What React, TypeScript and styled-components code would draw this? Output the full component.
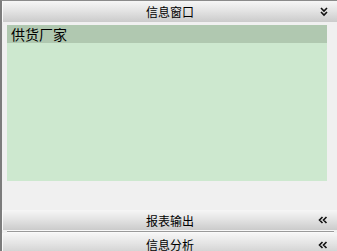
import React from 'react';
import styled, { createGlobalStyle } from 'styled-components';

const GlobalStyle = createGlobalStyle`
  html, body {
    margin: 0;
    padding: 0;
    overflow: hidden;
    background: #f0f0f0;
    font-family: "Noto Sans CJK SC", "Noto Sans", sans-serif;
  }
`;

const Frame = styled.div`
  width: 337px;
  height: 256px;
  box-sizing: border-box;
  border-left: 2px solid #7c7c7c;
  border-top: 1px solid #8a8a8a;
  background: #f0f0f0;
  display: flex;
  flex-direction: column;
  overflow: hidden;
`;

const Bar = styled.div<{ $h: number }>`
  height: ${(p) => p.$h}px;
  flex: none;
  position: relative;
  display: flex;
  align-items: center;
  justify-content: center;
  background: linear-gradient(#f6f6f6, #e4e4e4 45%, #cbcbcb);
  border-left: 1px solid #fbfbfb;
  font-size: 12px;
  color: #000;
  box-sizing: border-box;
`;

const BarIcon = styled.svg`
  position: absolute;
  right: 9px;
  top: 50%;
  transform: translateY(-50%);
`;

const Body = styled.div`
  flex: 1;
  padding: 3px 10px 29px 5px;
  display: flex;
`;

const List = styled.div`
  flex: 1;
  background: #cde8cf;
`;

const Row = styled.div<{ $active?: boolean }>`
  height: 18px;
  line-height: 18px;
  padding-left: 4px;
  font-size: 14px;
  color: #000;
  background: ${(p) => (p.$active ? '#b0c8b0' : 'transparent')};
`;

const Divider = styled.div`
  height: 3px;
  margin: 0 3px 0 5px;
  flex: none;
  background: linear-gradient(#f8f8f8 0 1px, #9a9a9a 1px 2px, #fafafa 2px);
`;

const DownChevrons = () => (
  <BarIcon width="8" height="10" viewBox="0 0 8 10">
    <path d="M1 1 L4 4 L7 1 M1 5 L4 8 L7 5" stroke="#111" strokeWidth="1.6" fill="none" />
  </BarIcon>
);

const LeftChevrons = () => (
  <BarIcon width="10" height="8" viewBox="0 0 10 8">
    <path d="M4.5 1 L1.5 4 L4.5 7 M8.5 1 L5.5 4 L8.5 7" stroke="#111" strokeWidth="1.6" fill="none" />
  </BarIcon>
);

export default function App() {
  return (
    <>
      <GlobalStyle />
      <Frame>
        <Bar $h={21}>
          信息窗口
          <DownChevrons />
        </Bar>
        <Body>
          <List>
            <Row $active>供货厂家</Row>
          </List>
        </Body>
        <Bar $h={20}>
          报表输出
          <LeftChevrons />
        </Bar>
        <Divider />
        <Bar $h={23}>
          信息分析
          <LeftChevrons />
        </Bar>
      </Frame>
    </>
  );
}
